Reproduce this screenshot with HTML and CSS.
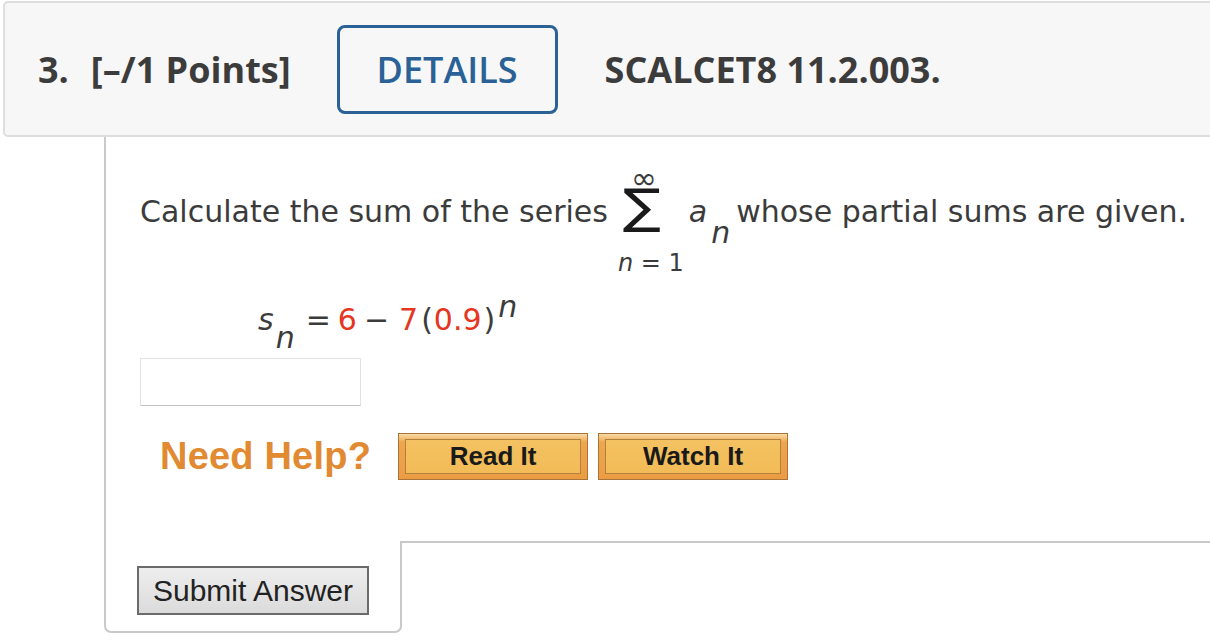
FILE: index.html
```html
<!DOCTYPE html>
<html>
<head>
<meta charset="utf-8">
<link rel="stylesheet" href="styles.css">
</head>
<body>
<div class="page">
  <div class="q-header">
    <span class="q-num">3.</span>
    <span class="q-points">[–/1 Points]</span>
    <span class="details-btn">DETAILS</span>
    <span class="q-code">SCALCET8 11.2.003.</span>
  </div>
  <div class="q-body">
    <div class="q-line">
      <span class="txt">Calculate the sum of the series</span>
      <span class="sum">
        <span class="sum-top">∞</span>
        <span class="sum-sig">∑</span>
        <span class="sum-bot"><i>n</i> = 1</span>
      </span>
      <span class="an"><i>a</i><span class="sub sub-a"><i>n</i></span></span>
      <span class="txt">whose partial sums are given.</span>
    </div>
    <div class="formula">
      <span class="an"><i>s</i><span class="sub"><i>n</i></span></span>
      <span class="op">=</span>
      <span class="red">6</span>
      <span class="op op-minus">−</span>
      <span class="red">7</span><span class="paren-l">(</span><span class="red">0.9</span><span class="paren-r">)</span><span class="sup"><i>n</i></span>
    </div>
    <div class="answer"></div>
    <div class="help-row">
      <span class="need-help">Need Help?</span>
      <span class="help-btn"><span class="help-inner">Read It</span></span>
      <span class="help-btn"><span class="help-inner">Watch It</span></span>
    </div>
  </div>
  <div class="submit-tab">
    <span class="submit-btn">Submit Answer</span>
  </div>
</div>
</body>
</html>
```
FILE: styles.css
```css
html, body {
  margin: 0;
  padding: 0;
  background: #ffffff;
  overflow: hidden;
}
.page {
  width: 1210px;
  height: 642px;
  overflow: hidden;
}
.q-header {
  box-sizing: border-box;
  margin: 1px 0 0 3px;
  width: 1220px;
  height: 136px;
  background: #f7f7f7;
  border: 2px solid #dedede;
  border-radius: 5px 0 0 5px;
  display: flex;
  align-items: center;
  padding-left: 33px;
  font-family: "Open Sans", sans-serif;
  font-weight: 700;
  font-size: 36px;
  color: #3c3c3c;
}
.q-num {
  margin-right: 22px;
}
.q-points {
  margin-right: 46px;
}
.details-btn {
  box-sizing: border-box;
  height: 89px;
  width: 221px;
  border: 3px solid #2a6196;
  border-radius: 8px;
  display: flex;
  align-items: center;
  justify-content: center;
  color: #2a6196;
  font-weight: 600;
  margin-right: 47px;
}
.q-body {
  margin-left: 104px;
  height: 406px;
  box-sizing: border-box;
  border-left: 2px solid #c9c9c9;
  border-bottom: 2px solid #c9c9c9;
  padding-left: 34px;
  padding-top: 11px;
  font-family: "DejaVu Sans", Verdana, sans-serif;
  font-size: 30px;
  color: #3b3b3b;
}
.q-line {
  display: flex;
  align-items: center;
  white-space: nowrap;
}
.sum {
  display: inline-flex;
  flex-direction: column;
  align-items: center;
  margin: 0 5px 0 10px;
  padding-top: 23px;
}
.sum-top {
  font-size: 31px;
  line-height: 14px;
  height: 14px;
  margin-right: 14px;
  margin-bottom: 3px;
}
.sum-sig {
  font-size: 48px;
  line-height: 36px;
  height: 36px;
  margin-right: 18px;
  color: #1a1a1a;
  transform: scaleX(1.18);
}
.sum-bot {
  font-size: 24px;
  line-height: 22px;
  margin-top: 28px;
}
.an {
  display: inline-flex;
  align-items: baseline;
  margin-right: 6px;
}
.sub {
  position: relative;
  top: 18px;
  margin-left: 4px;
}
.sub-a {
  top: 21px;
}
.sup {
  position: relative;
  top: -13px;
  margin-left: 2px;
}
.formula {
  margin-top: 28px;
  padding-left: 118px;
  display: flex;
  align-items: baseline;
  white-space: nowrap;
  height: 46px;
}
.formula .an {
  margin-right: 4px;
}
.formula .sub {
  margin-left: 2px;
}
.formula .op {
  margin: 0 7px;
}
.formula .op-minus {
  margin-right: 10px;
}
.paren-l {
  margin-left: 3px;
  margin-right: 1px;
}
.paren-r {
  margin-left: 2px;
  margin-right: 1px;
}
.red {
  color: #e5371f;
}
.answer {
  margin-top: 10px;
  box-sizing: border-box;
  width: 221px;
  height: 48px;
  border: 1px solid #e2e2e2;
  border-bottom-color: #c4c4c4;
  background: #fff;
}
.help-row {
  margin-top: 27px;
  display: flex;
  align-items: center;
  padding-left: 20px;
}
.need-help {
  font-family: "Liberation Sans", Arial, sans-serif;
  font-weight: 700;
  font-size: 38px;
  color: #e18a32;
  margin-right: 27px;
  letter-spacing: 0.2px;
}
.help-btn {
  box-sizing: border-box;
  width: 190px;
  height: 47px;
  border: 1px solid #a8743a;
  background: linear-gradient(#f9dca8 0%, #eea64d 18%, #eb9c43 100%);
  padding: 5px 6px 5px 6px;
  margin-right: 10px;
  display: flex;
}
.help-inner {
  flex: 1;
  border: 1px solid #b3813f;
  background: linear-gradient(#f4c262, #f2bb57);
  display: flex;
  align-items: center;
  justify-content: center;
  font-family: "Liberation Sans", Arial, sans-serif;
  font-weight: 700;
  font-size: 26px;
  color: #1a1a1a;
}
.submit-tab {
  box-sizing: border-box;
  margin: -2px 0 0 104px;
  width: 298px;
  height: 92px;
  background: #fff;
  border: 2px solid #c9c9c9;
  border-top: none;
  border-radius: 0 0 7px 7px;
  padding: 25px 0 0 31px;
}
.submit-btn {
  box-sizing: border-box;
  display: flex;
  align-items: center;
  justify-content: center;
  width: 232px;
  height: 49px;
  border: 2px solid #6b6b6b;
  background: linear-gradient(#eeeeee, #dbdbdb);
  font-family: "Liberation Sans", Arial, sans-serif;
  font-size: 30px;
  color: #222;
}
```
